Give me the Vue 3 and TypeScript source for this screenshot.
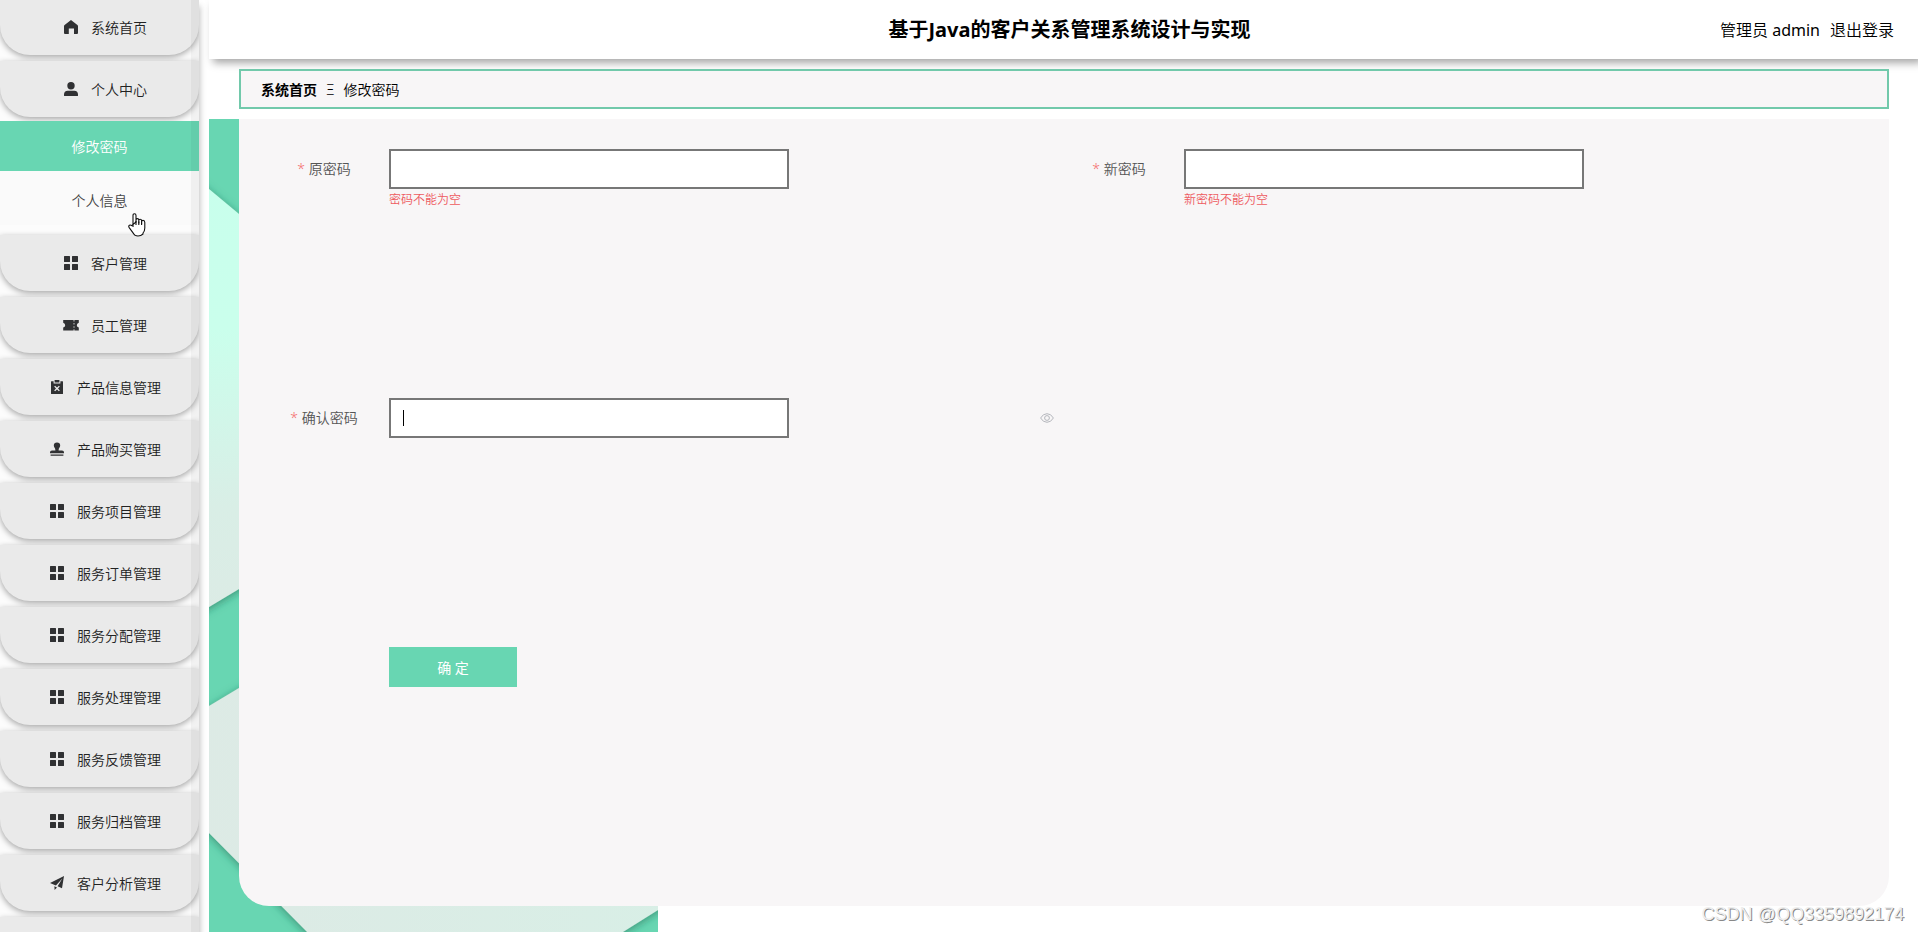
<script setup lang="ts">
import { ref } from 'vue'

interface MenuEntry {
  label: string
  icon: string
  children?: string[]
}

const icons: Record<string, string> = {
  home: 'M7 0 L13.4 5 Q14 5.5 14 6.3 V13 Q14 14 13 14 H10 V8.5 H4.8 V14 H1 Q0 14 0 13 V6.3 Q0 5.5 .6 5 Z',
  user: 'M7 0 A3.7 3.7 0 1 1 7 7.4 A3.7 3.7 0 1 1 7 0 Z M3.8 8.8 H10.2 Q14 8.8 14 12.6 V13.4 Q14 14 13.4 14 H.6 Q0 14 0 13.4 V12.6 Q0 8.8 3.8 8.8 Z',
  grid: 'M.6 0 H5.4 Q6 0 6 .6 V5.4 Q6 6 5.4 6 H.6 Q0 6 0 5.4 V.6 Q0 0 .6 0 Z M8.6 0 H13.4 Q14 0 14 .6 V5.4 Q14 6 13.4 6 H8.6 Q8 6 8 5.4 V.6 Q8 0 8.6 0 Z M.6 8 H5.4 Q6 8 6 8.6 V13.4 Q6 14 5.4 14 H.6 Q0 14 0 13.4 V8.6 Q0 8 .6 8 Z M8.6 8 H13.4 Q14 8 14 8.6 V13.4 Q14 14 13.4 14 H8.6 Q8 14 8 13.4 V8.6 Q8 8 8.6 8 Z',
  ticket: 'M-.8 2 H9.6 V3.4 H10.4 V2 H14.8 V4.8 Q12.8 5.4 12.8 7.2 Q12.8 9 14.8 9.6 V12.6 H10.4 V11.2 H9.6 V12.6 H-.8 V9.6 Q1.2 9 1.2 7.2 Q1.2 5.4 -.8 4.8 Z M9.6 5 V6.6 H10.4 V5 Z M9.6 8.2 V9.8 H10.4 V8.2 Z',
  release: 'M4.6 0 H9.4 V2.4 H4.6 Z M1.4 1.3 H3.6 V3.4 H10.4 V1.3 H12.6 Q13 1.3 13 1.8 V13.5 Q13 14 12.5 14 H1.5 Q1 14 1 13.5 V1.8 Q1 1.3 1.4 1.3 Z M4.2 6.6 L6 8.5 L4.2 10.4 L5.1 11.3 L7 9.4 L8.9 11.3 L9.8 10.4 L8 8.5 L9.8 6.6 L8.9 5.7 L7 7.6 L5.1 5.7 Z',
  stamp: 'M7 .4 A3.2 3.2 0 0 1 10.2 3.6 C10.2 5.6 8.6 6 8.6 8.4 H12 Q14 8.4 14 10.2 V11.2 H0 V10.2 Q0 8.4 2 8.4 H5.4 C5.4 6 3.8 5.6 3.8 3.6 A3.2 3.2 0 0 1 7 .4 Z M.6 12.4 H13.4 V13.8 H.6 Z',
  plane: 'M14 0 L12 12.2 L7.6 10.3 L12.3 2.6 L5.9 9.6 L0 6.9 Z M4.4 10.2 L7 11.4 L4.6 14 Z',
}

const menu: MenuEntry[] = [
  { label: '系统首页', icon: 'home' },
  { label: '个人中心', icon: 'user', children: ['修改密码', '个人信息'] },
  { label: '客户管理', icon: 'grid' },
  { label: '员工管理', icon: 'ticket' },
  { label: '产品信息管理', icon: 'release' },
  { label: '产品购买管理', icon: 'stamp' },
  { label: '服务项目管理', icon: 'grid' },
  { label: '服务订单管理', icon: 'grid' },
  { label: '服务分配管理', icon: 'grid' },
  { label: '服务处理管理', icon: 'grid' },
  { label: '服务反馈管理', icon: 'grid' },
  { label: '服务归档管理', icon: 'grid' },
  { label: '客户分析管理', icon: 'plane' },
]

const activeChild = ref('修改密码')
const oldPassword = ref('')
const newPassword = ref('')
const confirmPassword = ref('')
</script>

<template>
  <div class="layout">
    <aside class="sidebar">
      <nav class="menu">
        <template v-for="entry in menu" :key="entry.label">
          <button class="menu-item" type="button">
            <svg class="menu-icon" viewBox="0 0 14 14" aria-hidden="true">
              <path :d="icons[entry.icon]" fill="currentColor" fill-rule="evenodd" />
            </svg>
            <span>{{ entry.label }}</span>
          </button>
          <div v-if="entry.children" class="submenu">
            <button
              v-for="child in entry.children"
              :key="child"
              class="submenu-item"
              :class="{ active: child === activeChild }"
              type="button"
              @click="activeChild = child"
            >
              {{ child }}
            </button>
            <svg class="pointer" viewBox="0 0 18 24" aria-hidden="true">
              <path
                d="M5 14 V2.4 Q5 .8 6.5 .8 Q8 .8 8 2.4 V9 M8 9 V7 Q8 5.6 9.4 5.6 Q10.8 5.6 10.8 7 V10 V7.4 Q10.8 6.2 12.1 6.2 Q13.6 6.2 13.6 7.6 V10.6 V8.6 Q13.8 7.4 15 7.4 Q16.8 7.4 16.8 9.4 V15 Q16.8 18 15 20 V21 Q13 23 10 23 Q6.6 23 5.6 20.6 L1.2 14.6 Q.2 13 1.4 12.2 Q2.6 11.6 3.6 12.6 Z"
                fill="#fff"
                stroke="#111"
                stroke-width="1.1"
                stroke-linejoin="round"
              />
              <path d="M8 8 V12 M10.8 8.6 V12 M13.6 9.4 V12" fill="none" stroke="#111" stroke-width="1.1" />
            </svg>
          </div>
        </template>
        <div class="menu-tail"></div>
      </nav>
    </aside>

    <div class="main">
      <header class="header">
        <h1 class="title">基于Java的客户关系管理系统设计与实现</h1>
        <div class="account">
          <span>管理员 <span class="user-name">admin</span></span>
          <a class="logout" href="#">退出登录</a>
        </div>
      </header>

      <nav class="breadcrumb">
        <a class="crumb-home" href="#">系统首页</a>
        <span>Ξ</span>
        <span>修改密码</span>
      </nav>

      <main class="stage">
        <svg class="backdrop" viewBox="0 0 449 813" preserveAspectRatio="xMinYMin slice" aria-hidden="true">
          <defs>
            <linearGradient id="sheet" x1="0" y1="0" x2="0" y2="1">
              <stop offset="0" stop-color="#c8ffec" />
              <stop offset=".35" stop-color="#caffec" />
              <stop offset=".75" stop-color="#d9eee6" />
              <stop offset="1" stop-color="#dcebe5" />
            </linearGradient>
            <linearGradient id="fold" x1="0" y1="0" x2="1" y2="0">
              <stop offset="0" stop-color="#ddeae5" />
              <stop offset="1" stop-color="#d8efe6" />
            </linearGradient>
            <filter id="drop" x="-10%" y="-10%" width="120%" height="120%">
              <feDropShadow dx="0" dy="2" stdDeviation="4" flood-color="#1b6b52" flood-opacity=".6" />
            </filter>
          </defs>
          <rect width="449" height="813" fill="#68d6b2" />
          <path d="M-20 53 L0 70 L30 95 L200 240 V375 L30 470 L0 488 L-20 500 Z" fill="url(#sheet)" filter="url(#drop)" />
          <path d="M-20 599 L0 587 L30 569 L200 470 L480 600 V773 L449 791 L398 823 H108 L0 714 L-20 694 Z" fill="url(#fold)" filter="url(#drop)" />
        </svg>

        <form class="panel" @submit.prevent>
          <div class="field">
            <label class="label" for="old-password"><span class="star">*</span> 原密码</label>
            <div class="control">
              <input id="old-password" v-model="oldPassword" class="input" type="password" />
              <p class="error">密码不能为空</p>
            </div>
          </div>
          <div class="field">
            <label class="label" for="new-password"><span class="star">*</span> 新密码</label>
            <div class="control">
              <input id="new-password" v-model="newPassword" class="input" type="password" />
              <p class="error">新密码不能为空</p>
            </div>
          </div>
          <div class="field wide">
            <label class="label" for="confirm-password"><span class="star">*</span> 确认密码</label>
            <div class="control">
              <input id="confirm-password" v-model="confirmPassword" class="input" type="password" />
              <span class="caret"></span>
              <button class="reveal" type="button" aria-label="显示密码">
                <svg viewBox="0 0 14 10" aria-hidden="true">
                  <path d="M.6 5 Q3 .7 7 .7 T13.4 5 Q11 9.3 7 9.3 T.6 5 Z" fill="none" stroke="currentColor" />
                  <circle cx="7" cy="5" r="2.4" fill="none" stroke="currentColor" />
                </svg>
              </button>
            </div>
          </div>
          <div class="field wide actions">
            <button class="submit" type="submit">确 定</button>
          </div>
        </form>
      </main>
    </div>

    <div class="watermark">CSDN @QQ3359892174</div>
  </div>
</template>

<style>
body {
  margin: 0;
  background: #fff;
}
</style>

<style scoped>
* {
  box-sizing: border-box;
}

.layout {
  position: relative;
  display: grid;
  grid-template-columns: 199px minmax(0, 1fr);
  column-gap: 10px;
  height: 100vh;
  overflow: hidden;
  font-family: 'Noto Sans', 'Noto Sans CJK SC', sans-serif;
  font-size: 14px;
  font-weight: 350;
  color: #000;
}

button,
input {
  font: inherit;
  border: 0;
  padding: 0;
}

a {
  color: inherit;
  text-decoration: none;
}

.sidebar {
  position: relative;
  height: 100vh;
  background: #fcfcfc;
  box-shadow: 1px 6px 6px rgba(0, 0, 0, 0.25);
  clip-path: inset(0 -10px 0 0);
}

.sidebar::after {
  content: '';
  position: absolute;
  inset: 0 0 0 auto;
  width: 8px;
  background: rgba(0, 0, 0, 0.04);
  pointer-events: none;
}

.menu {
  display: flex;
  flex-direction: column;
  gap: 6px;
  height: 100%;
  overflow: hidden;
}

.menu-item {
  flex: 0 0 56px;
  display: flex;
  align-items: center;
  justify-content: center;
  gap: 13px;
  padding-left: 12px;
  border-radius: 0 0 30px 30px;
  background: #eaeaea;
  box-shadow: 0 2px 6px rgba(0, 0, 0, 0.35);
  color: #222;
  cursor: pointer;
}

.menu-item:first-child {
  margin-top: -1px;
}

.menu-icon {
  width: 14px;
  height: 14px;
  overflow: visible;
  color: #303133;
}

.submenu {
  position: relative;
  display: flex;
  flex-direction: column;
  gap: 4px;
  margin: -2px 0 4px;
  background: #fafafa;
}

.submenu-item {
  height: 50px;
  background: #fafafa;
  color: #444;
  cursor: pointer;
}

.submenu-item.active {
  background: #68d6b2;
  color: #fff;
}

.pointer {
  position: absolute;
  left: 128px;
  top: 92px;
  width: 18px;
  height: 24px;
  z-index: 2;
}

.menu-tail {
  flex: 0 0 56px;
  background: #eaeaea;
  box-shadow: 0 2px 6px rgba(0, 0, 0, 0.35);
}

.main {
  display: flex;
  flex-direction: column;
  min-width: 0;
}

.header {
  flex: 0 0 59px;
  display: grid;
  grid-template-columns: 1fr auto 1fr;
  align-items: center;
  padding: 0 24px 0 36px;
  box-shadow: 4px 4px 8px rgba(0, 0, 0, 0.35);
}

.title {
  grid-column: 2;
  margin: 0;
  font-size: 20px;
  line-height: 30px;
  font-weight: 700;
}

.account {
  display: flex;
  justify-content: flex-end;
  gap: 10px;
  font-size: 16px;
  line-height: 24px;
}

.user-name {
  font-weight: 400;
}

.breadcrumb {
  flex: 0 0 40px;
  display: flex;
  align-items: center;
  gap: 9px;
  margin: 10px 29px 10px 30px;
  padding: 0 20px;
  border: 2px solid #72c9ab;
  background: #f8f6f7;
}

.crumb-home {
  font-weight: 700;
}

.stage {
  position: relative;
  flex: 1;
  display: flex;
  padding: 0 29px 26px 30px;
}

.backdrop {
  position: absolute;
  left: 0;
  top: 0;
  width: 449px;
  height: 100%;
}

.panel {
  position: relative;
  flex: 1;
  display: grid;
  grid-template-columns: 1fr 1fr;
  grid-template-rows: repeat(3, 1fr);
  padding: 30px 30px 10px;
  border-radius: 0 0 30px 30px;
  background: #f8f6f7;
}

.field {
  display: flex;
  align-items: flex-start;
}

.field.wide {
  grid-column: 1;
}

.label {
  flex: 0 0 120px;
  padding-right: 10px;
  line-height: 40px;
  text-align: center;
  color: #555;
}

.star {
  color: #f56c6c;
}

.control {
  position: relative;
  flex: 1;
}

.input {
  display: block;
  width: 400px;
  max-width: 100%;
  height: 40px;
  padding: 0 12px;
  border: 2px solid #777;
  background: #fff;
}

.error {
  margin: 0;
  font-size: 12px;
  line-height: 22px;
  color: #ee5a5f;
}

.caret {
  position: absolute;
  left: 14px;
  top: 12px;
  width: 1px;
  height: 16px;
  background: #000;
}

.reveal {
  position: absolute;
  right: 5px;
  top: 0;
  display: flex;
  align-items: center;
  justify-content: center;
  width: 25px;
  height: 40px;
  background: none;
  color: #b4b6bc;
}

.reveal svg {
  width: 14px;
  height: 10px;
}

.actions {
  padding-left: 120px;
}

.submit {
  width: 128px;
  height: 40px;
  background: #68d6b2;
  color: #fff;
  font-weight: 400;
  cursor: pointer;
}

.watermark {
  position: absolute;
  right: 14px;
  bottom: 8px;
  font-family: 'Liberation Sans', sans-serif;
  font-size: 18px;
  line-height: 20px;
  color: #eee;
  text-shadow: 1px 1px 0 #888;
}
</style>
